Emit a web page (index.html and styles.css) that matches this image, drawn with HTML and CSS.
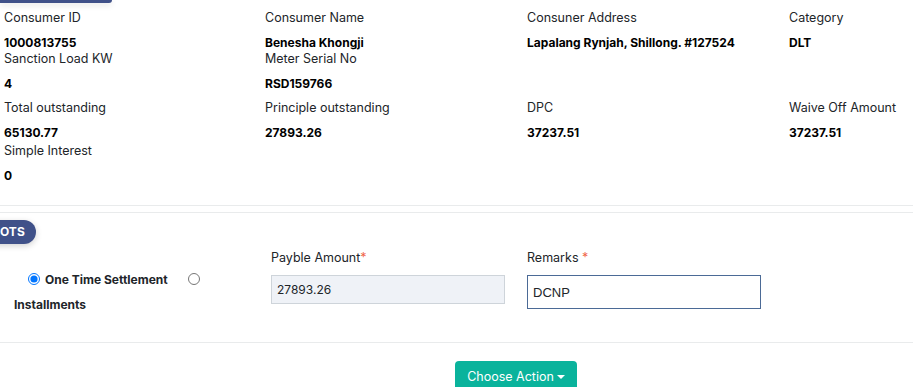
FILE: index.html
```html
<!DOCTYPE html>
<html lang="en">
<head>
    <meta charset="UTF-8">
    <meta name="viewport" content="width=device-width, initial-scale=1.0">
    <title>OTS Consumer Details</title>
    <link rel="stylesheet" href="styles.css">
</head>
<body>
    <div class="top-tab"></div>

    <div class="card details">
        <div class="field-grid">
            <div class="field">
                <div class="field-label">Consumer ID</div>
                <div class="field-value">1000813755</div>
            </div>
            <div class="field">
                <div class="field-label">Consumer Name</div>
                <div class="field-value">Benesha Khongji</div>
            </div>
            <div class="field">
                <div class="field-label">Consuner Address</div>
                <div class="field-value">Lapalang Rynjah, Shillong. #127524</div>
            </div>
            <div class="field">
                <div class="field-label">Category</div>
                <div class="field-value">DLT</div>
            </div>
            <div class="field">
                <div class="field-label">Sanction Load KW</div>
                <div class="field-value">4</div>
            </div>
            <div class="field">
                <div class="field-label">Meter Serial No</div>
                <div class="field-value">RSD159766</div>
            </div>
        </div>

        <div class="field-grid amounts">
            <div class="field">
                <div class="field-label">Total outstanding</div>
                <div class="field-value">65130.77</div>
            </div>
            <div class="field">
                <div class="field-label">Principle outstanding</div>
                <div class="field-value">27893.26</div>
            </div>
            <div class="field">
                <div class="field-label">DPC</div>
                <div class="field-value">37237.51</div>
            </div>
            <div class="field">
                <div class="field-label">Waive Off Amount</div>
                <div class="field-value">37237.51</div>
            </div>
            <div class="field">
                <div class="field-label">Simple Interest</div>
                <div class="field-value">0</div>
            </div>
        </div>
    </div>

    <div class="card ots">
        <div class="badge">OTS</div>

        <div class="ots-row">
            <div class="ots-type"><input type="radio" name="otsType" id="typeOts" checked><label for="typeOts">One Time Settlement</label><input type="radio" name="otsType" id="typeInst" class="second"> <label for="typeInst">Installments</label></div>

            <div class="form-col">
                <label class="form-label" for="payAmount">Payble Amount<span class="req">*</span></label>
                <input type="text" id="payAmount" class="form-input disabled" value="27893.26" readonly>
            </div>

            <div class="form-col">
                <label class="form-label" for="remarks">Remarks <span class="req">*</span></label>
                <input type="text" id="remarks" class="form-input remarks" value="DCNP">
            </div>
        </div>
    </div>

    <div class="actions">
        <button class="action-btn">Choose Action<span class="caret"></span></button>
    </div>
</body>
</html>
```

FILE: styles.css
```css
body {
    margin: 0;
    font-family: Inter, "Liberation Sans", sans-serif;
    color: #212529;
    background-color: #fff;
    overflow: hidden;
}

.top-tab {
    width: 112px;
    height: 3px;
    background-color: #405189;
    border-radius: 0 0 12px 0;
    box-shadow: 0 2px 6px rgba(0, 0, 0, 0.15);
}

/* consumer details */
.card.details {
    padding: 7px 0 21px 4px;
    border-bottom: 1px solid #e9ebec;
}

.field-grid {
    display: grid;
    grid-template-columns: 261px 262px 262px 261px;
    width: 1046px;
}

.field-grid.amounts {
    margin-top: 8px;
    row-gap: 2px;
}

.field-label {
    font-size: 12.5px;
    line-height: 16px;
}

.field-value {
    margin-top: 9px;
    font-size: 12px;
    line-height: 16px;
    font-weight: 700;
    color: #000;
}

/* OTS section */
.card.ots {
    margin-top: 6px;
    padding: 7px 0 25px 0;
    border-top: 1px solid #e9ebec;
    border-bottom: 1px solid #e9ebec;
}

.badge {
    display: inline-block;
    margin-left: -20px;
    padding: 0 11px 0 20px;
    height: 24px;
    line-height: 24px;
    font-size: 12px;
    font-weight: 700;
    color: #fff;
    background-color: #405189;
    border-radius: 0 12px 12px 0;
    box-shadow: 0 2px 6px rgba(0, 0, 0, 0.18);
}

.ots-row {
    display: flex;
    margin-top: 5px;
}

.ots-type {
    box-sizing: border-box;
    width: 265px;
    padding: 18px 14px 0 14px;
    text-indent: 14px;
    font-size: 12px;
    font-weight: 700;
    line-height: 25px;
}

.ots-type input[type="radio"] {
    width: 12px;
    height: 12px;
    margin: 0 5px 0 0;
    vertical-align: -1px;
}

.ots-type input.second {
    margin-left: 20px;
}

.ots-type label {
    text-indent: 0;
}

.form-col {
    box-sizing: border-box;
    width: 256px;
    padding-left: 6px;
}

.form-label {
    display: block;
    font-size: 12.5px;
    line-height: 16px;
    margin-top: 1px;
    margin-bottom: 9px;
}

.req {
    color: #f06548;
}

.form-input {
    box-sizing: border-box;
    width: 234px;
    padding: 0 5px;
    border: 1px solid #ced4da;
    font-size: 12px;
    color: #212529;
    outline: none;
}

.form-input.disabled {
    height: 29px;
    background-color: #eff2f7;
    font-family: Inter, "Liberation Sans", sans-serif;
}

.form-input.remarks {
    height: 34px;
    border-color: #4b6a96;
    font-family: "Liberation Sans", Arial, sans-serif;
    font-size: 13px;
}

/* action button */
.actions {
    padding: 18px 0 0 455px;
}

.action-btn {
    width: 122px;
    height: 36px;
    padding: 0 0 4px 0;
    border: none;
    border-radius: 4px;
    background-color: #0ab39c;
    color: #fff;
    font-family: Inter, "Liberation Sans", sans-serif;
    font-size: 12.5px;
    line-height: 18px;
    cursor: pointer;
}

.caret {
    display: inline-block;
    width: 0;
    height: 0;
    margin-left: 3px;
    vertical-align: 2px;
    border-left: 4px solid transparent;
    border-right: 4px solid transparent;
    border-top: 4px solid #fff;
}
```
